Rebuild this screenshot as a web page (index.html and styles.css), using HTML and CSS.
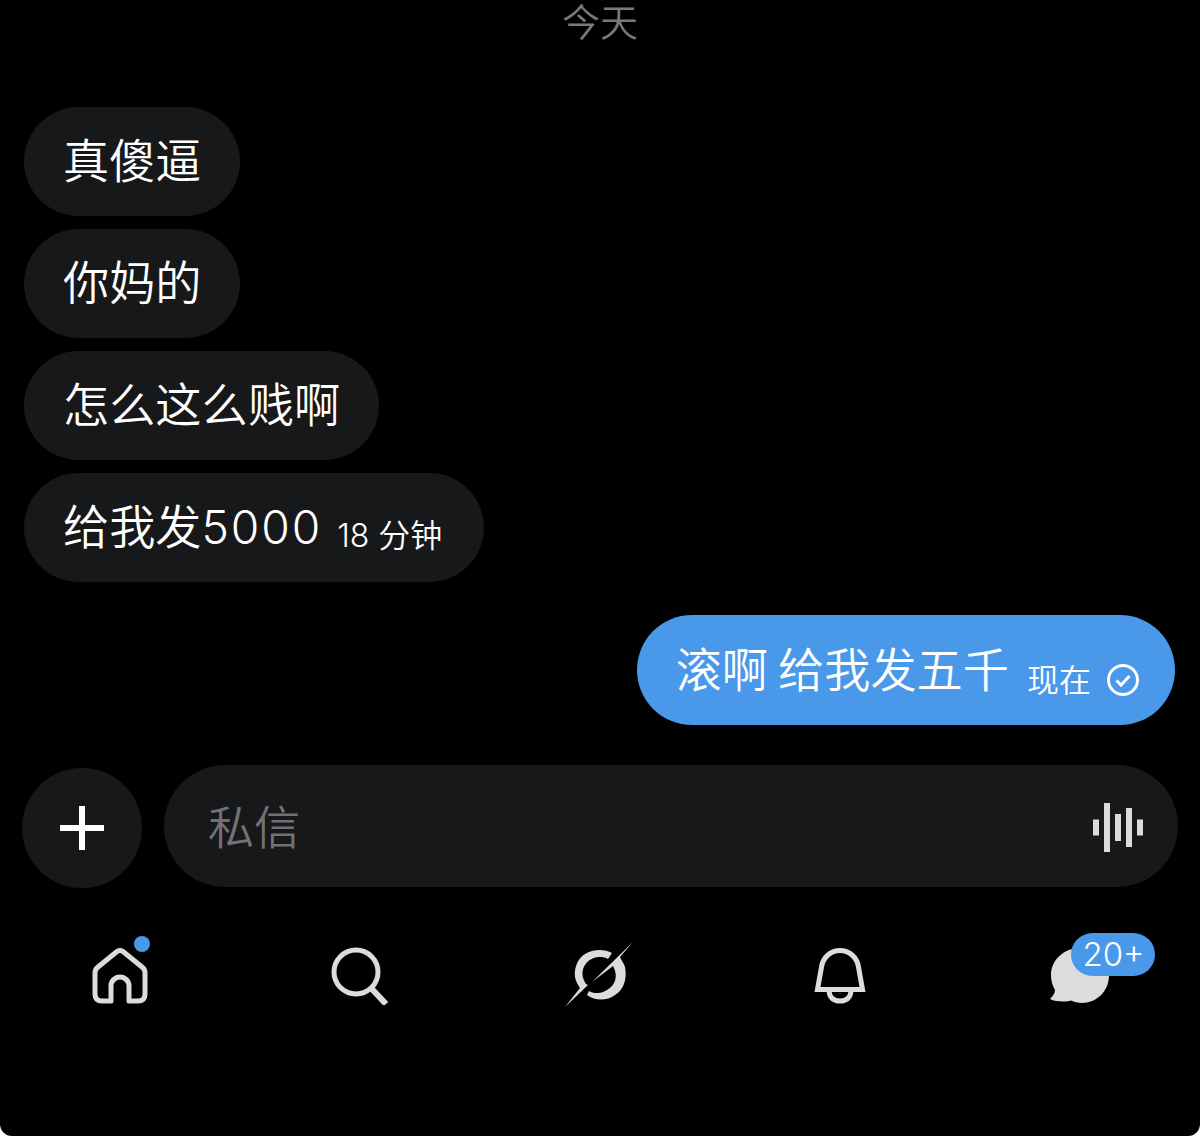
FILE: index.html
```html
<!DOCTYPE html>
<html lang="zh-CN">
<head>
<meta charset="utf-8">
<title>私信</title>
<link rel="stylesheet" href="styles.css">
</head>
<body>
<main class="screen">
  <div class="date">今天</div>
  <section class="thread">
    <div class="bubble"><span class="msg">真傻逼</span></div>
    <div class="bubble"><span class="msg">你妈的</span></div>
    <div class="bubble"><span class="msg">怎么这么贱啊</span></div>
    <div class="bubble received-last"><span class="msg">给我发<span class="digits">5000</span></span><span class="meta">18 分钟</span></div>
    <div class="bubble sent"><span class="msg">滚啊 给我发五千</span><span class="meta">现在</span>
      <svg class="check" viewBox="0 0 34 34"><circle cx="17" cy="17" r="14.5" fill="none" stroke="#fff" stroke-width="3"/><path d="M10.500 17.500l4.500 4.500 8.500-9" fill="none" stroke="#fff" stroke-width="3"/></svg>
    </div>
  </section>
  <section class="composer">
    <button class="plus"><svg viewBox="0 0 46 46" width="46" height="46"><path d="M23 1v44M1 23h44" stroke="#fff" stroke-width="6"/></svg></button>
    <div class="input">
      <span class="placeholder">私信</span>
      <svg class="wave" viewBox="0 0 50 49" width="50" height="49"><path d="M3 16.500v16M14 0v49M25 11v27M36 5v39M47 16.500v16" stroke="#dcdcdc" stroke-width="6"/></svg>
    </div>
  </section>
  <nav class="tabs">
    <div class="tab home">
      <svg viewBox="0 0 56 56" width="56" height="56"><path d="M3 24.500C3 22 4 20.500 6 19L25 3.500Q28 1.500 31 3.500L50 19C52 20.500 53 22 53 24.500V46C53 51 50 53 46 53H37V38C37 33 33 29 28 29S19 33 19 38V53H10C6 53 3 51 3 46Z" fill="none" stroke="#dcdcdc" stroke-width="5" stroke-linejoin="round"/></svg>
      <span class="dot"></span>
    </div>
    <div class="tab">
      <svg viewBox="0 0 58 58" width="58" height="58"><circle cx="25" cy="25" r="22" fill="none" stroke="#dcdcdc" stroke-width="5"/><path d="M40 41l15 16" stroke="#dcdcdc" stroke-width="6"/></svg>
    </div>
    <div class="tab">
      <svg viewBox="0 1 90 80" width="90" height="80"><path d="M57 18C50 14 38 14 30 19C22 24 19 34 20 42C21 47 23 50 25 53L10 72L33 50L31 49C27 43 26 36 30 30C35 22 46 20 53 24Z" fill="#dcdcdc"/><path d="M32 60C40 66 52 66 60 60C70 54 72 42 70 32C69 28 66 25 65 22L77.700 7.300L37 47L58 31C62 38 62 46 56 52C50 58 40 60 34 56Z" fill="#dcdcdc"/></svg>
    </div>
    <div class="tab">
      <svg viewBox="0 1 80 80" width="80" height="80"><path d="M17.500 54.500L21.500 32C23 22 31 15.500 40 15.500S57 22 58.500 32L62.500 54.500Z" fill="none" stroke="#dcdcdc" stroke-width="5"/><path d="M29 55C29 63 34 66 40 66S51 63 51 55" fill="none" stroke="#dcdcdc" stroke-width="5"/></svg>
    </div>
    <div class="tab chat">
      <svg viewBox="5 21 70 60" width="70" height="60"><path d="M40 23C56 23 69 35 69 50C69 67 56 78 42 78C38 78 34 77 31 75.500C26 77 16 77 10 74C13 71 15 68 15 65C12 60 11 55 11 50C11 35 24 23 40 23Z" fill="#dcdcdc"/></svg>
      <span class="badge">20+</span>
    </div>
  </nav>
</main>
</body>
</html>
```
FILE: styles.css
```css
* { box-sizing: border-box; }
html, body { margin: 0; background: #fff; }
body { font-family: Inter, "Noto Sans CJK SC", "Noto Sans", sans-serif; color: #fff; }
.screen { width: 1200px; height: 1136px; overflow: hidden; display: flex; flex-direction: column; background: #000; border-radius: 0 0 12px 12px; }
.date { height: 46px; line-height: 45px; text-align: center; font-size: 38px; color: #77797d; font-weight: 350; }
.thread { display: flex; flex-direction: column; align-items: flex-start; gap: 13px; padding: 61px 24px 0; }
.bubble { height: 109px; border-radius: 55px; background: #17181a; padding: 0 38.500px 0 39px; display: flex; align-items: center; font-size: 46.200px; font-weight: 350; white-space: nowrap; }
.msg { padding-bottom: 8px; }
.digits { letter-spacing: 1.900px; }
.meta { font-size: 32px; margin-left: 15px; padding-top: 10px; }
.received-last { padding-right: 42px; }
.sent { align-self: flex-end; margin-top: 20px; margin-right: 1px; height: 110px; background: #4a98e9; padding: 0 35px 0 39px; word-spacing: -3px; }
.sent .meta { margin-left: 18px; padding-top: 16px; }
.check { width: 34px; height: 34px; margin-left: 15px; margin-top: 20px; }
.composer { display: flex; align-items: flex-start; gap: 22px; padding: 40px 22px 0; }
.plus { width: 120px; height: 120px; flex: none; margin-top: 3px; border: 0; padding: 0; border-radius: 50%; background: #17181a; display: flex; align-items: center; justify-content: center; }
.input { flex: 1; height: 122px; border-radius: 61px; background: #17181a; display: flex; align-items: center; justify-content: space-between; padding: 0 35px 0 44px; }
.placeholder { font-size: 46px; color: #707276; padding-bottom: 4px; font-weight: 350; }
.wave { margin-top: 3px; }
.tabs { display: flex; justify-content: space-between; padding: 48px 0 0; }
.tab { position: relative; width: 240px; height: 80px; display: flex; align-items: center; justify-content: center; }
.dot { position: absolute; left: 134px; top: 0; width: 16px; height: 16px; border-radius: 50%; background: #4a98e9; }
.badge { position: absolute; left: 111px; top: -3px; width: 84px; height: 43px; border-radius: 22px; background: #4a98e9; font-size: 33px; font-weight: 300; line-height: 42px; text-align: center; padding-left: 1px; }
```
